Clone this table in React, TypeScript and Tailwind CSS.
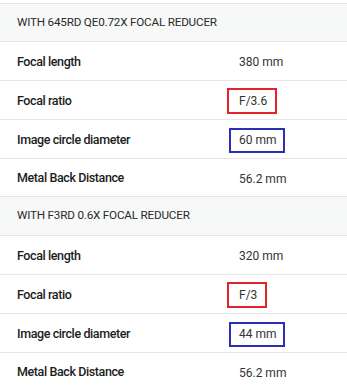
import React from "react";

type Row = { label: string; value: string; box?: "red" | "blue" };

const groups: { title: string; rows: Row[] }[] = [
  {
    title: "WITH 645RD QE0.72X FOCAL REDUCER",
    rows: [
      { label: "Focal length", value: "380 mm" },
      { label: "Focal ratio", value: "F/3.6", box: "red" },
      { label: "Image circle diameter", value: "60 mm", box: "blue" },
      { label: "Metal Back Distance", value: "56.2 mm" },
    ],
  },
  {
    title: "WITH F3RD 0.6X FOCAL REDUCER",
    rows: [
      { label: "Focal length", value: "320 mm" },
      { label: "Focal ratio", value: "F/3", box: "red" },
      { label: "Image circle diameter", value: "44 mm", box: "blue" },
      { label: "Metal Back Distance", value: "56.2 mm" },
    ],
  },
];

function Value({ row }: { row: Row }) {
  if (row.box === "red") {
    return (
      <span className="-ml-[12px] inline-flex h-[26px] items-center border-2 border-[#e3232c] pl-[10px] pr-[8px]">
        {row.value}
      </span>
    );
  }
  if (row.box === "blue") {
    return (
      <span className="-ml-[10px] inline-flex h-[25px] items-center border-2 border-[#2b2fb5] pl-[8px] pr-[6px]">
        {row.value}
      </span>
    );
  }
  return <span>{row.value}</span>;
}

export default function App() {
  return (
    <div
      className="w-[347px] h-[390px] overflow-hidden bg-white pt-[3px]"
      style={{ fontFamily: "Roboto, 'Liberation Sans', sans-serif" }}
    >
      {groups.map((g, gi) => (
        <div key={gi}>
          <div
            className={`flex items-center border-t border-b border-[#e4e4e4] bg-[#f7f8f8] pl-[17px] text-[11.7px] text-[#2a2a2a] tracking-[-0.2px] ${
              gi === 0 ? "h-[39px]" : "h-[40px]"
            }`}
          >
            {g.title}
          </div>
          {g.rows.map((r, ri) => (
            <div
              key={ri}
              className={`grid grid-cols-[239px_1fr] items-center pt-[2px] ${
                ri < 3 ? "h-[39px] border-b border-[#e6e6e6]" : "h-[37px]"
              }`}
            >
              <div className="pl-[17px] text-[12.5px] font-medium tracking-[-0.4px] text-[#1c1c1c]">{r.label}</div>
              <div className="text-[12px] text-[#333333]">
                <Value row={r} />
              </div>
            </div>
          ))}
        </div>
      ))}
    </div>
  );
}
